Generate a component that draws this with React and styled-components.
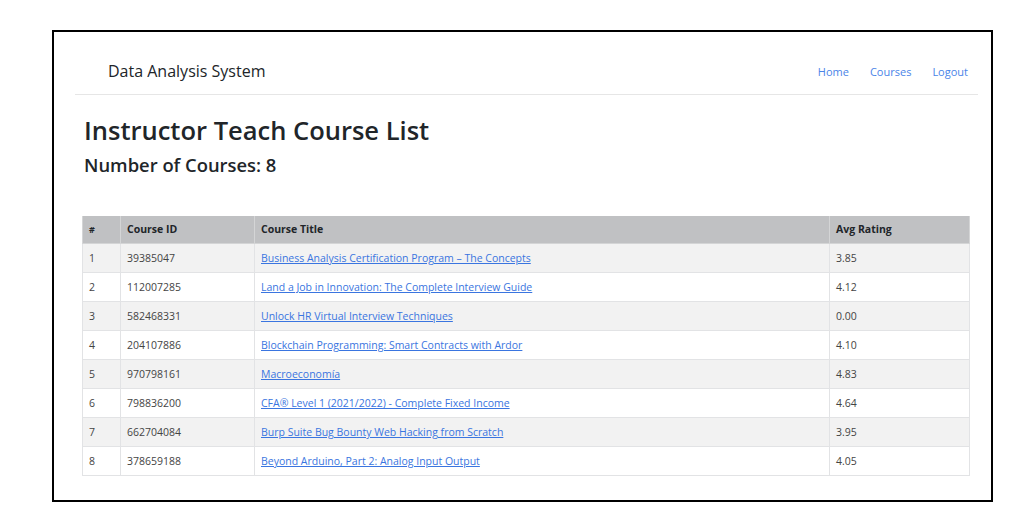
import React from 'react';
import styled, { createGlobalStyle } from 'styled-components';

const GlobalStyle = createGlobalStyle`
	html, body {
		margin: 0;
		padding: 0;
		background: #fff;
	}
	body {
		font-family: "Open Sans", "Noto Sans", sans-serif;
		color: #212529;
	}
`;

const Frame = styled.div`
	box-sizing: border-box;
	margin: 30px 0 0 52px;
	width: 941px;
	height: 472px;
	border: 2px solid #000;
	padding: 0 13px 0 21px;
`;

const Navbar = styled.nav`
	display: flex;
	align-items: center;
	justify-content: space-between;
	box-sizing: border-box;
	height: 63px;
	border-bottom: 1px solid #e6e6e6;
	padding: 16px 10px 0 33px;
`;

const Brand = styled.span`
	font-size: 16px;
	color: #212529;
`;

const NavLinks = styled.div`
	display: flex;
	gap: 21px;
`;

const NavLink = styled.a`
	font-size: 11px;
	color: #4a84e8;
	text-decoration: none;
`;

const Content = styled.div`
	padding: 20px 0 0 9px;
`;

const Title = styled.h2`
	margin: 0;
	font-size: 25.5px;
	font-weight: 600;
	line-height: 1.2;
`;

const Subtitle = styled.h4`
	margin: 8px 0 0;
	font-size: 18.4px;
	font-weight: 600;
	line-height: 1.2;
`;

const Table = styled.table`
	margin: 40px 0 0 -2px;
	width: 888px;
	border-collapse: collapse;
	font-size: 10.5px;
`;

const HeadCell = styled.th`
	background: #c0c1c3;
	text-align: left;
	font-weight: 700;
	height: 28px;
	padding: 0 6px;
	border: 1px solid #d4d5d6;
	border-top: none;
	box-sizing: border-box;
	width: ${(p) => p.$w || 'auto'};
	font-size: ${(p) => (p.$small ? '9px' : '10.5px')};
`;

const Row = styled.tr`
	background: ${(p) => (p.$striped ? '#f2f2f2' : '#fff')};
`;

const Cell = styled.td`
	height: 28px;
	padding: 0 6px;
	border: 1px solid #e2e3e5;
	color: #444;
`;

const CourseLink = styled.a`
	color: #3a75e0;
	text-decoration: underline;
`;

const courses = [
	{ id: '39385047', title: 'Business Analysis Certification Program – The Concepts', rating: '3.85' },
	{ id: '112007285', title: 'Land a Job in Innovation: The Complete Interview Guide', rating: '4.12' },
	{ id: '582468331', title: 'Unlock HR Virtual Interview Techniques', rating: '0.00' },
	{ id: '204107886', title: 'Blockchain Programming: Smart Contracts with Ardor', rating: '4.10' },
	{ id: '970798161', title: 'Macroeconomía', rating: '4.83' },
	{ id: '798836200', title: 'CFA® Level 1 (2021/2022) - Complete Fixed Income', rating: '4.64' },
	{ id: '662704084', title: 'Burp Suite Bug Bounty Web Hacking from Scratch', rating: '3.95' },
	{ id: '378659188', title: 'Beyond Arduino, Part 2: Analog Input Output', rating: '4.05' }
];

export default function App() {
	return (
		<>
			<GlobalStyle />
			<Frame>
				<Navbar>
					<Brand>Data Analysis System</Brand>
					<NavLinks>
						<NavLink href="#">Home</NavLink>
						<NavLink href="#">Courses</NavLink>
						<NavLink href="#">Logout</NavLink>
					</NavLinks>
				</Navbar>
				<Content>
					<Title>Instructor Teach Course List</Title>
					<Subtitle>Number of Courses: 8</Subtitle>
					<Table>
						<thead>
							<tr>
								<HeadCell $w="38px" $small>#</HeadCell>
								<HeadCell $w="134px">Course ID</HeadCell>
								<HeadCell $w="575px">Course Title</HeadCell>
								<HeadCell>Avg Rating</HeadCell>
							</tr>
						</thead>
						<tbody>
							{courses.map((c, i) => (
								<Row key={c.id} $striped={i % 2 === 0}>
									<Cell>{i + 1}</Cell>
									<Cell>{c.id}</Cell>
									<Cell>
										<CourseLink href="#">{c.title}</CourseLink>
									</Cell>
									<Cell>{c.rating}</Cell>
								</Row>
							))}
						</tbody>
					</Table>
				</Content>
			</Frame>
		</>
	);
}
